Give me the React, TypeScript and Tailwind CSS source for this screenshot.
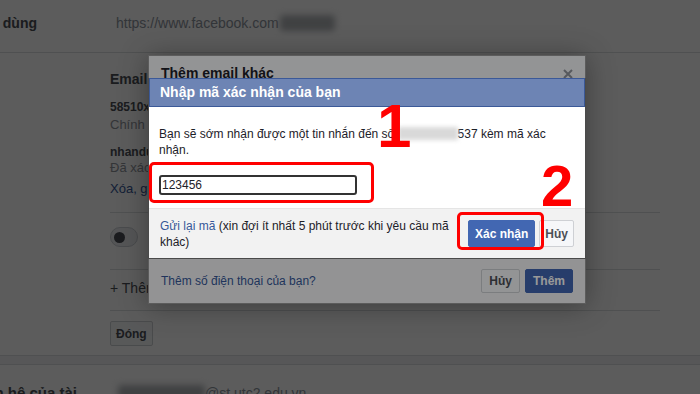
export default function App() {
  return (
    <div className="relative w-[700px] h-[394px] overflow-hidden bg-white font-['Liberation_Sans',Arial,sans-serif] text-[#1d2129]">
      {/* settings page behind the dialogs */}
      <div className="flex h-[53px] items-start pt-[15px] border-b border-[#dddfe2]">
        <div className="flex w-[37px] shrink-0 justify-end whitespace-nowrap text-[14px] leading-[16px] font-bold text-[#4b4f56]">
          Tên người dùng
        </div>
        <div className="ml-[79px] flex items-center whitespace-nowrap text-[14px] leading-[16px] text-[#8d949e]">
          https://www.facebook.com
          <span className="ml-[1px] inline-block h-[16px] w-[55px] rounded bg-[#b3b6ba] blur-[3px]" />
        </div>
      </div>

      <div className="h-[303px] border-b border-[#dddfe2] pl-[110px] pr-[40px]">
        <div className="border-b border-[#dddfe2] pb-[15px]">
          <div className="pt-[17px] text-[14px] leading-[18px] font-bold text-[#4b4f56]">Email</div>
          <div className="mt-[11px] text-[12px] leading-[16px] font-bold text-[#4b4f56]">58510xxxxx@gmail.com</div>
          <div className="mt-[1px] text-[13px] leading-[17px] text-[#90949c]">Chính</div>
          <div className="mt-[12px] text-[12px] leading-[14px] font-bold text-[#4b4f56]">nhanduong@st.utc2.edu.vn</div>
          <div className="text-[13px] leading-[17px] text-[#90949c]">Đã xác nhận</div>
          <div className="mt-[4px] text-[13px] leading-[17px] text-[#365899]">Xóa, gửi lại mã</div>
        </div>
        <div className="border-b border-[#dddfe2] pt-[14px] pb-[22px]">
          <div className="flex h-[20px] w-[28px] items-center rounded-full border border-[#ccd0d5] bg-[#ebedf0] px-[3px]">
            <span className="h-[11px] w-[11px] rounded-full bg-[#4b4f56]" />
          </div>
        </div>
        <div className="border-b border-[#dddfe2] pt-[9px] pb-[13px] text-[14px] leading-[18px] text-[#4b4f56]">
          + Thêm email hoặc số di động khác
        </div>
        <button className="mt-[10px] h-[25px] rounded-[2px] border border-[#ced0d4] bg-[#f6f7f9] px-[5px] text-[12px] font-bold text-[#4b4f56]">
          Đóng
        </button>
      </div>

      <div className="h-[8px] bg-[#f2f3f5]" />
      <div className="flex items-start border-t border-[#dddfe2] pt-[19px]">
        <div className="flex w-[77px] shrink-0 justify-end whitespace-nowrap text-[15px] leading-[18px] font-bold text-[#4b4f56]">
          Liên hệ của tài
        </div>
        <div className="ml-[41px] flex items-center whitespace-nowrap text-[14px] leading-[18px] text-[#8d949e]">
          <span className="inline-block h-[16px] w-[87px] rounded bg-[#b3b6ba] blur-[3px]" />
          @st.utc2.edu.vn
        </div>
      </div>

      {/* first dialog layer */}
      <div className="absolute inset-0 bg-black/40" />
      <div className="absolute left-[148px] top-[55px] flex h-[249px] w-[438px] flex-col border border-black/40 bg-white shadow-[0_2px_26px_rgba(0,0,0,0.35)]">
        <div className="flex h-[40px] justify-between border-b border-[#e5e5e5] bg-[#f6f7f9] pl-[12px] pr-[12px] pt-[8px]">
          <span className="text-[14px] leading-[18px] font-bold">Thêm email khác</span>
          <svg width="10" height="10" viewBox="0 0 10 10" className="mt-[5px]">
            <path d="M1 1 L9 9 M9 1 L1 9" stroke="#90949c" strokeWidth="2" />
          </svg>
        </div>
        <div className="flex-1" />
        <div className="flex h-[46px] items-center justify-between border-t border-[#e5e5e5] bg-[#f5f6f7] px-[12px]">
          <span className="text-[12px] leading-[16px] text-[#365899]">Thêm số điện thoại của bạn?</span>
          <div className="flex gap-[5px]">
            <button className="h-[24px] rounded-[2px] border border-[#ced0d4] bg-[#f6f7f9] px-[7px] text-[12px] font-bold text-[#4b4f56]">
              Hủy
            </button>
            <button className="h-[24px] rounded-[2px] border border-[#4267b2] bg-[#4267b2] px-[7px] text-[12px] font-bold text-white">
              Thêm
            </button>
          </div>
        </div>
      </div>

      {/* verification dialog */}
      <div className="absolute inset-0 bg-black/40" />
      <div className="absolute left-[148px] top-[78px] w-[438px] border-x border-b border-[#4a4a4a] bg-white">
        <div className="flex h-[29px] items-center border border-[#3b5998] bg-[#6d84b4] pl-[10px] text-[14px] font-bold text-white">
          Nhập mã xác nhận của bạn
        </div>
        <div className="px-[10px] pt-[18px] pb-[13px]">
          <p className="text-[12px] leading-[16px]">
            Bạn sẽ sớm nhận được một tin nhắn đến số{" "}
            <span className="inline-block h-[13px] w-[60px] translate-y-[2px] bg-[#d9d9d9] blur-[2px]" />
            537 kèm mã xác nhận.
          </p>
          <div className="mt-[17px] flex h-[20px] w-[198px] items-center rounded-[3px] border-2 border-[#333] px-[1px] text-[12px]">
            123456
          </div>
        </div>
        <div className="flex h-[50px] items-center justify-between border-t border-[#e5e5e5] bg-[#f2f2f2] px-[11px]">
          <p className="w-[295px] text-[12px] leading-[16px]">
            <span className="text-[#365899]">Gửi lại mã</span> (xin đợi ít nhất 5 phút trước khi yêu cầu mã khác)
          </p>
          <div className="flex gap-[4px]">
            <button className="h-[27px] rounded-[2px] border border-[#4267b2] bg-[#4267b2] px-[6px] text-[12px] font-bold text-white">
              Xác nhận
            </button>
            <button className="h-[27px] rounded-[2px] border border-[#ced0d4] bg-[#f6f7f9] px-[5px] text-[12px] font-bold text-[#4b4f56]">
              Hủy
            </button>
          </div>
        </div>
      </div>

      {/* red annotations */}
      <div className="absolute left-[149px] top-[162px] h-[41px] w-[225px] rounded-[5px] border-[3px] border-[#ff0000]" />
      <div className="absolute left-[457px] top-[212px] h-[38px] w-[87px] rounded-[5px] border-[3px] border-[#ff0000]" />
      <span className="absolute left-[377px] top-[95px] text-[62px] leading-[62px] font-bold text-[#ff0000]">1</span>
      <span className="absolute left-[541px] top-[157px] text-[58px] leading-[58px] font-bold text-[#ff0000]">2</span>
    </div>
  );
}
